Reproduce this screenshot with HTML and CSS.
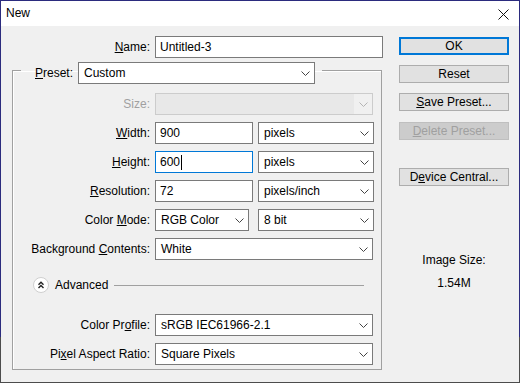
FILE: index.html
```html
<!DOCTYPE html>
<html lang="en">
<head>
  <meta charset="UTF-8" />
  <title>New</title>
  <link rel="stylesheet" href="styles.css">
</head>
<body>

  <div class="window">

    <div class="titlebar">
      <span class="title">New</span>
      <svg class="close" viewBox="0 0 11 11" width="11" height="11">
        <path d="M0.5 0.5 L10.5 10.5 M10.5 0.5 L0.5 10.5" stroke="#111" stroke-width="1" fill="none" />
      </svg>
    </div>

    <div class="content">

      <div class="main">
        <div class="name-row">
          <span class="label"><u>N</u>ame:</span>
          <div class="field name-field">Untitled-3</div>
        </div>

        <fieldset class="group">
          <legend class="legend">
            <span class="legend-label"><u>P</u>reset:</span>
            <div class="select preset-select">
              <span>Custom</span>
              <svg class="chev" viewBox="0 0 9 5" width="9" height="5"><polyline points="0.5,0.5 4.5,4.5 8.5,0.5" /></svg>
            </div>
          </legend>

          <div class="row">
            <span class="label disabled">Size:</span>
            <div class="select wide is-disabled">
              <span></span>
              <svg class="chev" viewBox="0 0 9 5" width="9" height="5"><polyline points="0.5,0.5 4.5,4.5 8.5,0.5" /></svg>
            </div>
          </div>

          <div class="row">
            <span class="label"><u>W</u>idth:</span>
            <div class="field small">900</div>
            <div class="select unit">
              <span>pixels</span>
              <svg class="chev" viewBox="0 0 9 5" width="9" height="5"><polyline points="0.5,0.5 4.5,4.5 8.5,0.5" /></svg>
            </div>
          </div>

          <div class="row">
            <span class="label"><u>H</u>eight:</span>
            <div class="field small focused">600<span class="caret"></span></div>
            <div class="select unit">
              <span>pixels</span>
              <svg class="chev" viewBox="0 0 9 5" width="9" height="5"><polyline points="0.5,0.5 4.5,4.5 8.5,0.5" /></svg>
            </div>
          </div>

          <div class="row">
            <span class="label"><u>R</u>esolution:</span>
            <div class="field small">72</div>
            <div class="select unit">
              <span>pixels/inch</span>
              <svg class="chev" viewBox="0 0 9 5" width="9" height="5"><polyline points="0.5,0.5 4.5,4.5 8.5,0.5" /></svg>
            </div>
          </div>

          <div class="row">
            <span class="label">Color <u>M</u>ode:</span>
            <div class="select mode">
              <span>RGB Color</span>
              <svg class="chev" viewBox="0 0 9 5" width="9" height="5"><polyline points="0.5,0.5 4.5,4.5 8.5,0.5" /></svg>
            </div>
            <div class="select unit">
              <span>8 bit</span>
              <svg class="chev" viewBox="0 0 9 5" width="9" height="5"><polyline points="0.5,0.5 4.5,4.5 8.5,0.5" /></svg>
            </div>
          </div>

          <div class="row">
            <span class="label">Background <u>C</u>ontents:</span>
            <div class="select wide">
              <span>White</span>
              <svg class="chev" viewBox="0 0 9 5" width="9" height="5"><polyline points="0.5,0.5 4.5,4.5 8.5,0.5" /></svg>
            </div>
          </div>

          <div class="advanced">
            <svg class="adv-icon" viewBox="0 0 16 16" width="16" height="16">
              <circle cx="8" cy="8" r="7.5" fill="#fff" stroke="#cfcfcf" />
              <polyline points="5.5,7.8 8,5.3 10.5,7.8" fill="none" stroke="#222" stroke-width="1.4" />
              <polyline points="5.5,11 8,8.5 10.5,11" fill="none" stroke="#222" stroke-width="1.4" />
            </svg>
            <span class="adv-text">Advanced</span>
            <div class="adv-line"></div>
          </div>

          <div class="row">
            <span class="label">Color Pr<u>o</u>file:</span>
            <div class="select wide">
              <span>sRGB IEC61966-2.1</span>
              <svg class="chev" viewBox="0 0 9 5" width="9" height="5"><polyline points="0.5,0.5 4.5,4.5 8.5,0.5" /></svg>
            </div>
          </div>

          <div class="row">
            <span class="label">Pi<u>x</u>el Aspect Ratio:</span>
            <div class="select wide">
              <span>Square Pixels</span>
              <svg class="chev" viewBox="0 0 9 5" width="9" height="5"><polyline points="0.5,0.5 4.5,4.5 8.5,0.5" /></svg>
            </div>
          </div>
        </fieldset>
      </div>

      <div class="actions">
        <div class="button default">OK</div>
        <div class="button">Reset</div>
        <div class="button"><u>S</u>ave Preset...</div>
        <div class="button disabled"><u>D</u>elete Preset...</div>
        <div class="button device">D<u>e</u>vice Central...</div>

        <div class="image-size">
          <div>Image Size:</div>
          <div class="size-value">1.54M</div>
        </div>
      </div>

    </div>
  </div>

</body>
</html>
```

FILE: styles.css
```css
body {
  margin: 0;
  font-family: 'Liberation Sans', Arial, sans-serif;
  font-size: 12px;
  color: #000;
  background: #f0f0f0;
}

u {
  text-decoration: underline;
  text-underline-offset: 1px;
}

.window {
  width: 520px;
  height: 383px;
  box-sizing: border-box;
  border: 1px solid;
  border-image: linear-gradient(to bottom, #2b2b7e 0, #2b2b7e 88%, #4c4c4c 88%, #4c4c4c 100%) 1;
  background: #f0f0f0;
  display: flex;
  flex-direction: column;
}

/* Title bar */
.titlebar {
  height: 25px;
  background: #fff;
  display: flex;
  align-items: center;
  justify-content: space-between;
  padding: 0 10px 0 5px;
  flex-shrink: 0;
}

.title {
  font-size: 12px;
  margin-top: -1px;
}

.close {
  margin-top: 1px;
}

/* Main body */
.content {
  display: flex;
  padding: 0 0 0 11px;
  flex: 1;
}

.main {
  width: 371px;
  padding-top: 10px;
}

.name-row {
  display: flex;
  align-items: center;
  gap: 5px;
}

.name-row .label {
  width: 138px;
}

.label {
  width: 137px;
  text-align: right;
  white-space: nowrap;
  flex-shrink: 0;
}

.label.disabled {
  color: #a0a0a0;
}

.field {
  height: 22px;
  box-sizing: border-box;
  border: 1px solid #7a7a7a;
  background: #fff;
  padding: 0 4px;
  display: flex;
  align-items: center;
}

.name-field {
  width: 228px;
}

.field.small {
  width: 98px;
}

.field.focused {
  border-color: #0078d7;
}

.caret {
  display: inline-block;
  width: 1px;
  height: 15px;
  background: #000;
  margin-left: 1px;
}

.select {
  height: 22px;
  box-sizing: border-box;
  border: 1px solid #7a7a7a;
  background: #fff;
  padding: 0 4px 0 5px;
  display: flex;
  align-items: center;
  justify-content: space-between;
}

.chev {
  fill: none;
  stroke: #444;
  stroke-width: 1;
}

.select.wide {
  width: 218px;
}

.select.unit {
  width: 116px;
}

.select.mode {
  width: 94px;
  margin-right: 4px;
}

.select.is-disabled {
  border-color: #cccccc;
  background: linear-gradient(to right, #e8e8e8 0, #e8e8e8 198px, #f0f0f0 198px);
}

.select.is-disabled .chev {
  stroke: #b4b4b4;
}

/* Preset group */
.group {
  margin: 4px 0 0 0;
  width: 369px;
  box-sizing: border-box;
  border: 1px solid #a0a0a0;
  box-shadow: inset 1px 1px 0 #fff;
  padding: 14px 7px 4px 0;
  display: flex;
  flex-direction: column;
  gap: 7px;
}

.legend {
  margin-left: 8px;
  padding: 0 7px 0 14px;
  height: 17px;
  display: flex;
  align-items: flex-start;
  gap: 5px;
}

.legend-label {
  line-height: 22px;
}

.preset-select {
  width: 237px;
}

.row {
  display: flex;
  align-items: center;
  gap: 5px;
}

/* Advanced toggle */
.advanced {
  display: flex;
  align-items: center;
  padding: 10px 10px 14px 20px;
}

.adv-icon {
  flex-shrink: 0;
}

.adv-text {
  margin-left: 6px;
}

.adv-line {
  flex: 1;
  height: 1px;
  background: #a0a0a0;
  margin-left: 6px;
}

/* Right-hand buttons */
.actions {
  width: 110px;
  margin-left: 16px;
  padding-top: 11px;
  display: flex;
  flex-direction: column;
  gap: 10px;
}

.button {
  height: 18px;
  box-sizing: border-box;
  border: 1px solid #adadad;
  background: #e1e1e1;
  display: flex;
  align-items: center;
  justify-content: center;
}

.button.default {
  border-color: #0078d7;
  box-shadow: inset 0 0 0 1px #0078d7;
}

.button.disabled {
  color: #a0a0a0;
  background: #cccccc;
  border-color: #bfbfbf;
  margin-top: 1px;
}

.button.device {
  margin-top: 18px;
}

.image-size {
  margin-top: 57px;
  text-align: center;
  line-height: 15px;
}

.size-value {
  margin-top: 8px;
}
```
